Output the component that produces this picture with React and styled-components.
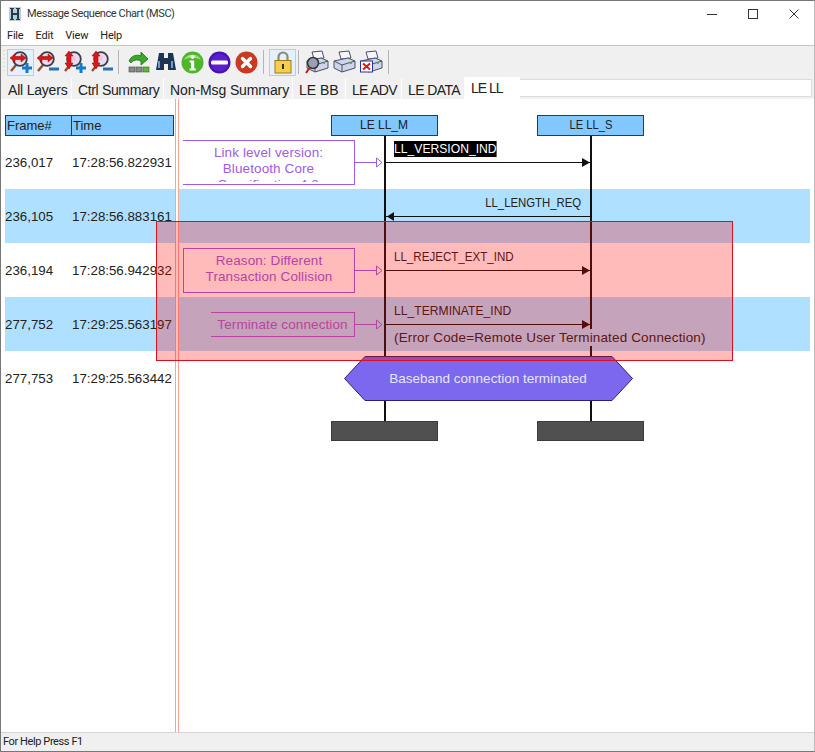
import styled, { createGlobalStyle } from 'styled-components'

const GlobalStyle = createGlobalStyle`
  html, body { margin: 0; padding: 0; background: #fff; }
  #root { width: 815px; height: 752px; overflow: hidden; }
`

const Win = styled.div`
  box-sizing: border-box;
  width: 815px;
  height: 752px;
  display: flex;
  flex-direction: column;
  background: #fff;
  border: 1px solid #777;
  border-right-color: #bbb;
  font-family: Roboto, "Liberation Sans", sans-serif;
  overflow: hidden;
`
const TitleBar = styled.div`
  height: 25px;
  flex: none;
  display: flex;
  align-items: center;
  padding-left: 8px;
  font-size: 11px;
  color: #333;
`
const TitleText = styled.span`
  flex: 1;
  margin-left: 6px;
  letter-spacing: -.4px;
`
const WinButton = styled.div`
  width: 41px;
  display: flex;
  justify-content: center;
  align-items: center;
  color: #333;
`
const MenuBar = styled.div`
  height: 19px;
  flex: none;
  display: flex;
  align-items: center;
  border-bottom: 1px solid #c4c4c4;
  padding-left: 6px;
  gap: 12px;
  font-size: 11px;
  letter-spacing: -.2px;
  color: #222;
`
const Toolbar = styled.div`
  height: 32px;
  flex: none;
  display: flex;
  align-items: center;
  background: #f0f0f0;
  padding-left: 2px;
`
const Grip = styled.div`
  width: 2px;
  height: 24px;
  margin-right: 2px;
  background: repeating-linear-gradient(#e8d8b8 0 1px, transparent 1px 4px);
`
const Tool = styled.div`
  box-sizing: border-box;
  width: 27px;
  height: 27px;
  flex: none;
  display: flex;
  align-items: center;
  justify-content: center;
  background: ${p => (p.$on ? '#e4f0fb' : 'transparent')};
  border: 1px solid ${p => (p.$on ? '#a9d3f3' : 'transparent')};
`
const Sep = styled.div`
  width: 1px;
  height: 24px;
  flex: none;
  background: #b4b4b4;
  margin: 0 ${p => p.$r ?? 4}px 0 ${p => p.$l ?? 3}px;
`
const TabStrip = styled.div`
  height: 21px;
  flex: none;
  display: flex;
  background: #f0f0f0;
  padding-left: 1px;
  font-family: "Liberation Sans", sans-serif;
  font-size: 14px;
  color: #222;
`
const Tab = styled.div`
  box-sizing: border-box;
  width: ${p => p.$w}px;
  padding-left: 6px;
  line-height: 24px;
  white-space: nowrap;
  letter-spacing: ${p => p.$ls ?? 0}px;
  border-right: 1px solid #fff;
  ${p => p.$active && 'background:#fff; margin-top:-1px; line-height:22px; border:0;'}
`
const TabRest = styled.div`
  width: 291px;
  height: 16px;
  margin-top: 1px;
  background: #fff;
  border: 1px solid #dcdcdc;
  border-left: 0;
`
const Chart = styled.div`
  position: relative;
  flex: 1;
  padding-top: 16px;
  font-family: "Liberation Sans", sans-serif;
  font-size: 13.5px;
  color: #222;
`
const ChartGrid = styled.div`
  display: grid;
  margin-left: 4px;
  width: 805px;
  grid-template-columns: 67px 102px 9px 172px 30px 206px 1fr;
  height: 54px;
  align-items: center;
  background: ${p => (p.$band ? '#b0e0ff' : 'transparent')};
`
const HeadRow = styled.div`
  display: grid;
  margin-left: 4px;
  height: 20px;
  grid-template-columns: 169px 157px 107px 99px 107px;
`
const ColumnHead = styled.div`
  box-sizing: border-box;
  display: flex;
  background: #80c8ff;
  border: 1px solid #243c54;
`
const HeadCell = styled.div`
  box-sizing: border-box;
  padding-left: 1px;
  line-height: 19px;
  font-size: 13px;
  width: ${p => p.$w};
  border-right: ${p => (p.$line ? '1px solid #243c54' : '0')};
`
const Instance = styled.div`
  box-sizing: border-box;
  grid-column: ${p => p.$col};
  text-align: center;
  line-height: 18px;
  position: relative;
  z-index: 2;
  background: ${p => (p.$end ? '#505050' : '#80c8ff')};
  border: 1px solid ${p => (p.$end ? '#3c3c3c' : '#243c54')};
`
const EndRow = styled(HeadRow)`
  margin-top: 16px;
`
const Cell = styled.div`
  grid-column: ${p => p.$col};
  white-space: nowrap;
  font-size: 13.3px;
`
const Narrow = styled.span`
  display: inline-block;
  white-space: nowrap;
  transform: scaleX(${p => p.$sx});
  transform-origin: ${p => p.$origin ?? 'left'} center;
`
const Note = styled.div`
  box-sizing: border-box;
  grid-column: 4;
  justify-self: end;
  width: ${p => p.$w}px;
  height: ${p => p.$h}px;
  margin-top: ${p => p.$mt ?? 0}px;
  padding-top: ${p => p.$pt}px;
  text-align: center;
  letter-spacing: .1px;
  color: #9e5ce2;
  border: 1px solid #9e5ce2;
  border-left: ${p => (p.$open ? '0' : '1px solid #9e5ce2')};
  white-space: nowrap;
`
const NoteText = styled.div`
  line-height: 16px;
  overflow: hidden;
  max-height: 37px;
`
const NoteArrow = styled.svg`
  grid-column: 5;
  display: block;
`
const Msg = styled.div`
  grid-column: 6;
  height: 54px;
  display: flex;
  flex-direction: column;
`
const MsgLabel = styled.div`
  height: 22px;
  line-height: 28px;
  padding: 0 ${p => (p.$right ? '10px' : '0')} 0 ${p => (p.$right ? '0' : '9px')};
  text-align: ${p => (p.$right ? 'right' : 'left')};
  white-space: nowrap;
`
const Selected = styled(Narrow)`
  background: #000;
  color: #fff;
  line-height: 16px;
`
const MsgArrow = styled.svg`
  display: block;
  flex: none;
  position: relative;
  z-index: 2;
`
const MsgSub = styled.div`
  align-self: flex-start;
  position: relative;
  z-index: 2;
  margin-left: 9px;
  line-height: 17px;
  letter-spacing: .15px;
  padding-right: 2px;
  background: #b0e0ff;
  white-space: nowrap;
`
const Banner = styled.div`
  grid-column: 3 / -1;
  grid-row: 1;
  position: relative;
  z-index: 2;
  width: 290px;
  height: 45px;
  margin-left: 170px;
  display: flex;
  align-items: center;
  justify-content: center;
  color: #e6e6fa;
  svg { position: absolute; inset: 0; }
  span { position: relative; right: 1px; }
`
const Lifeline = styled.div`
  position: absolute;
  z-index: 1;
  top: 36px;
  left: ${p => p.$x}px;
  width: 2px;
  height: 286px;
  background: #111;
`
const Splitter = styled.div`
  position: absolute;
  z-index: 2;
  top: 0;
  bottom: 0;
  left: 174px;
  width: 2px;
  background: #fff;
  border: solid #f7a596;
  border-width: 0 1px;
`
const Highlight = styled.div`
  position: absolute;
  z-index: 3;
  left: 155px;
  top: 122px;
  width: 577px;
  height: 140px;
  box-sizing: border-box;
  background: rgba(255, 0, 0, .27);
  border: 1px solid #d81020;
`
const StatusBar = styled.div`
  height: 18px;
  flex: none;
  background: #f0f0f0;
  border-top: 1px solid #d4d4d4;
  padding-left: 2px;
  font-size: 11px;
  letter-spacing: -.4px;
  line-height: 18px;
  color: #222;
`

const Mag = ({ vertical, sign }) => (
  <svg width="24" height="24" viewBox="0 0 24 24">
    <path d="M2 21l5-6" stroke="#a04830" strokeWidth="2.4" />
    <circle cx="11" cy="9" r="6.8" fill="#e8dcf0" stroke="#3c3c4c" strokeWidth="1.8" />
    <circle cx="10" cy="8" r="3" fill="#f2c8d8" />
    {vertical
      ? <path d="M6 1l4 5H8v7h2l-4 6-4-6h2V6H2z" fill="#e01414" stroke="#8a0808" strokeWidth=".5" />
      : <path d="M1 8l5-4v2.500h6V4l5 4-5 4V9.500H6V12z" fill="#e01414" stroke="#8a0808" strokeWidth=".5" />}
    {sign === '+'
      ? <path d="M18 13v10M13 18h10" stroke="#1a78c8" strokeWidth="3" />
      : <path d="M13 19h10" stroke="#2a70b0" strokeWidth="3" />}
  </svg>
)

const GoTo = () => (
  <svg width="24" height="24" viewBox="0 0 24 24">
    <path d="M2 11c2-5 7-7 12-5V2l7 7-7 6v-4c-4-2-8-1-10 2z" fill="#3aa82a" stroke="#1d6a14" strokeWidth=".8" />
    <rect x="2" y="17" width="6" height="5" fill="#8a8a8a" stroke="#444" strokeWidth=".6" />
    <rect x="9" y="17" width="6" height="5" fill="#8a8a8a" stroke="#444" strokeWidth=".6" />
    <rect x="16" y="17" width="6" height="5" fill="#5cb83c" stroke="#2c6a1a" strokeWidth=".6" />
  </svg>
)

const Binoculars = () => (
  <svg width="22" height="24" viewBox="0 0 22 24">
    <path d="M4 3h5v5h4V3h5l3 17h-8v-6H9v6H1z" fill="#1c3554" />
    <rect x="3" y="11" width="2" height="7" fill="#6f9cc8" />
    <rect x="16" y="11" width="2" height="7" fill="#6f9cc8" />
  </svg>
)

const Info = () => (
  <svg width="23" height="23" viewBox="0 0 23 23">
    <circle cx="11.5" cy="11.5" r="11" fill="#4fb52d" />
    <path d="M3 9a9 8 0 0 1 17 0c-5-3-12-3-17 0z" fill="#9ade7a" />
    <circle cx="11.5" cy="5.8" r="2.1" fill="#fff" />
    <path d="M8.5 9.5h4.7v8h1.6v2H8.5v-2h1.5v-6H8.5z" fill="#fff" />
  </svg>
)

const Stop = () => (
  <svg width="23" height="23" viewBox="0 0 23 23">
    <circle cx="11.5" cy="11.5" r="11" fill="#4b10b4" />
    <circle cx="11.5" cy="11.5" r="8.8" fill="#5a20d0" />
    <rect x="3" y="9.5" width="17" height="4" rx="1.5" fill="#fff" />
  </svg>
)

const Cancel = () => (
  <svg width="23" height="23" viewBox="0 0 23 23">
    <circle cx="11.5" cy="11.5" r="11" fill="#c93a22" />
    <path d="M7.5 7.5l8 8M15.5 7.5l-8 8" stroke="#fff" strokeWidth="3.4" strokeLinecap="round" />
  </svg>
)

const Lock = () => (
  <svg width="18" height="24" viewBox="0 0 18 24">
    <path d="M4.500 11V7a4.500 4.500 0 0 1 9 0v4" fill="none" stroke="#8a8a78" strokeWidth="2.2" />
    <rect x="1" y="10.500" width="16" height="12.500" fill="#f6cf4a" stroke="#a07a18" />
    <rect x="8" y="14" width="2" height="5" fill="#3a3010" />
  </svg>
)

const Printer = ({ mark }) => (
  <svg width="24" height="24" viewBox="0 0 24 24">
    <path d="M7 2l10-1 2 7-10 1z" fill="#f6f6fa" stroke="#4a5068" />
    <path d="M2 11l14-3 7 3v7l-13 4-8-4z" fill="#d0d4e8" stroke="#4a5068" />
    <path d="M2 11l8 4 13-4M10 15v7" fill="none" stroke="#4a5068" />
    <circle cx="19" cy="13" r="1" fill="#38b030" />
    {mark === 'zoom' && (
      <>
        <circle cx="8" cy="13" r="5.500" fill="#9aa0b4" stroke="#333" strokeWidth="1.500" />
        <path d="M1 23l4-6" stroke="#c81818" strokeWidth="2" />
      </>
    )}
    {mark === 'cross' && (
      <>
        <rect x="1.500" y="11" width="12" height="11" fill="#fff" stroke="#2038a0" />
        <path d="M4 13.500l7 6M11 13.500l-7 6" stroke="#e01818" strokeWidth="2" />
      </>
    )}
  </svg>
)

const OpenArrow = () => (
  <NoteArrow width="30" height="11" viewBox="0 0 30 11">
    <path d="M0 5.500h21" stroke="#9e5ce2" />
    <path d="M21.500 1l5.500 4.500-5.500 4.500z" fill="none" stroke="#9e5ce2" />
  </NoteArrow>
)

const Arrow = ({ left }) => (
  <MsgArrow width="206" height="10" viewBox="0 0 206 10">
    <path d="M1 5.500h204" stroke="#111" />
    {left
      ? <path d="M2 5.500l7-4.500v9z" fill="#111" />
      : <path d="M205 5.500l-8-4.500v9z" fill="#111" />}
  </MsgArrow>
)

function App() {
  return (
    <Win>
      <GlobalStyle />
      <TitleBar>
        <svg width="12" height="14" viewBox="0 0 12 14">
          <rect width="12" height="14" fill="#b8d0dc" />
          <path d="M1 1h4v1H4v4h4V2H7V1h4v1h-1v10h1v1H7v-1h1V8H4v4h1v1H1v-1h1V2H1z" fill="#2a3a44" />
        </svg>
        <TitleText>Message Sequence Chart (MSC)</TitleText>
        <WinButton>
          <svg width="10" height="10"><path d="M0 5.500h10" stroke="currentColor" /></svg>
        </WinButton>
        <WinButton>
          <svg width="10" height="10"><rect x=".5" y=".5" width="9" height="9" fill="none" stroke="currentColor" /></svg>
        </WinButton>
        <WinButton>
          <svg width="10" height="10"><path d="M.5.500l9 9M9.500.500l-9 9" stroke="currentColor" /></svg>
        </WinButton>
      </TitleBar>
      <MenuBar>
        <span>File</span><span>Edit</span><span>View</span><span>Help</span>
      </MenuBar>
      <Toolbar>
        <Grip />
        <Tool $on><Mag sign="+" /></Tool>
        <Tool><Mag sign="-" /></Tool>
        <Tool><Mag vertical sign="+" /></Tool>
        <Tool><Mag vertical sign="-" /></Tool>
        <Sep $r={6} />
        <Tool><GoTo /></Tool>
        <Tool><Binoculars /></Tool>
        <Tool><Info /></Tool>
        <Tool><Stop /></Tool>
        <Tool><Cancel /></Tool>
        <Sep $r={5} />
        <Tool $on><Lock /></Tool>
        <Sep $l={2} $r={4} />
        <Tool><Printer mark="zoom" /></Tool>
        <Tool><Printer /></Tool>
        <Tool><Printer mark="cross" /></Tool>
        <Sep $l={4} />
      </Toolbar>
      <TabStrip>
        <Tab $w={70} $ls={-0.2}>All Layers</Tab>
        <Tab $w={92} $ls={-0.35}>Ctrl Summary</Tab>
        <Tab $w={129} $ls={-0.1}>Non-Msg Summary</Tab>
        <Tab $w={53}>LE BB</Tab>
        <Tab $w={56} $ls={-0.7}>LE ADV</Tab>
        <Tab $w={63} $ls={-0.6}>LE DATA</Tab>
        <Tab $w={55} $ls={-1} $active>LE LL</Tab>
        <TabRest />
      </TabStrip>
      <Chart>
        <Splitter />
        <Lifeline $x={383} />
        <Lifeline $x={589} />
        <HeadRow>
          <ColumnHead>
            <HeadCell $w="66px" $line>Frame#</HeadCell>
            <HeadCell>Time</HeadCell>
          </ColumnHead>
          <Instance $col={3}><Narrow $sx={0.89} $origin="center">LE LL_M</Narrow></Instance>
          <Instance $col={5}><Narrow $sx={0.83} $origin="center">LE LL_S</Narrow></Instance>
        </HeadRow>
        <ChartGrid>
          <Cell $col={1}>236,017</Cell>
          <Cell $col={2}>17:28:56.822931</Cell>
          <Note $w={172} $h={45} $mt={1} $pt={4} $open>
            <NoteText>Link level version:<br />Bluetooth Core<br />Specification 4.2</NoteText>
          </Note>
          <OpenArrow />
          <Msg>
            <MsgLabel><Selected $sx={0.9}>LL_VERSION_IND</Selected></MsgLabel>
            <Arrow />
          </Msg>
        </ChartGrid>
        <ChartGrid $band>
          <Cell $col={1}>236,105</Cell>
          <Cell $col={2}>17:28:56.883161</Cell>
          <Msg>
            <MsgLabel $right><Narrow $sx={0.84} $origin="right">LL_LENGTH_REQ</Narrow></MsgLabel>
            <Arrow left />
          </Msg>
        </ChartGrid>
        <ChartGrid>
          <Cell $col={1}>236,194</Cell>
          <Cell $col={2}>17:28:56.942932</Cell>
          <Note $w={172} $h={45} $mt={1} $pt={4}>
            <NoteText>Reason: Different<br />Transaction Collision</NoteText>
          </Note>
          <OpenArrow />
          <Msg>
            <MsgLabel><Narrow $sx={0.857}>LL_REJECT_EXT_IND</Narrow></MsgLabel>
            <Arrow />
          </Msg>
        </ChartGrid>
        <ChartGrid $band>
          <Cell $col={1}>277,752</Cell>
          <Cell $col={2}>17:29:25.563197</Cell>
          <Note $w={144} $h={25} $pt={4} $open>
            <NoteText>Terminate connection</NoteText>
          </Note>
          <OpenArrow />
          <Msg>
            <MsgLabel><Narrow $sx={0.9}>LL_TERMINATE_IND</Narrow></MsgLabel>
            <Arrow />
            <MsgSub>(Error Code=Remote User Terminated Connection)</MsgSub>
          </Msg>
        </ChartGrid>
        <ChartGrid>
          <Cell $col={1}>277,753</Cell>
          <Cell $col={2}>17:29:25.563442</Cell>
          <Banner>
            <svg width="290" height="45" viewBox="0 0 290 45">
              <path d="M21 .5H268L288.500 22.500 268 44.500H21L.5 22.500z" fill="#7b68ee" stroke="#2a2670" />
            </svg>
            <span>Baseband connection terminated</span>
          </Banner>
        </ChartGrid>
        <EndRow>
          <Instance $col={3} $end />
          <Instance $col={5} $end />
        </EndRow>
        <Highlight />
      </Chart>
      <StatusBar>For Help Press F1</StatusBar>
    </Win>
  )
}

export default App
